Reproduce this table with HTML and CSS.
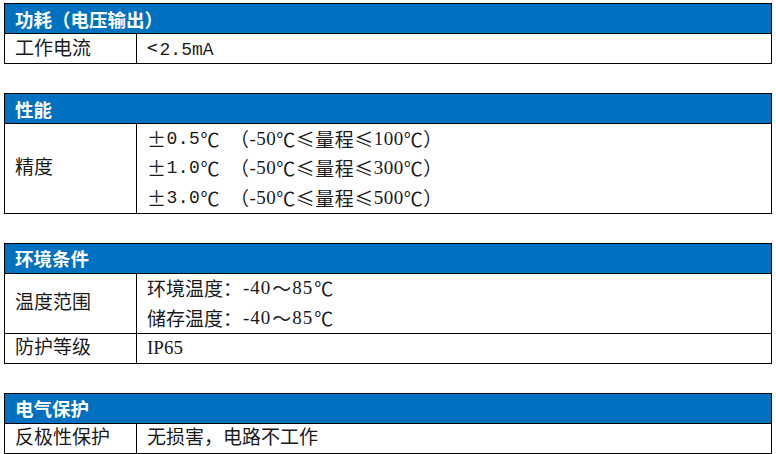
FILE: index.html
```html
<!DOCTYPE html>
<html lang="zh-CN">
<head>
    <meta charset="UTF-8">
    <title>技术参数</title>
    <link rel="stylesheet" href="styles.css">
</head>
<body>
    <!-- 功耗 -->
    <table class="spec">
        <tr><th colspan="2">功耗（电压输出）</th></tr>
        <tr>
            <td class="name">工作电流</td>
            <td><span class="cjk lt">&lt;</span><span class="mono">2.5mA</span></td>
        </tr>
    </table>

    <!-- 性能 -->
    <table class="spec">
        <tr><th colspan="2">性能</th></tr>
        <tr>
            <td class="name">精度</td>
            <td>
                <div class="line wide"><span class="cjk">±</span><span class="mono">0.5</span><span class="cjk">℃　（</span>-50<span class="cjk">℃≤量程≤</span>100<span class="cjk">℃）</span></div>
                <div class="line wide"><span class="cjk">±</span><span class="mono">1.0</span><span class="cjk">℃　（</span>-50<span class="cjk">℃≤量程≤</span>300<span class="cjk">℃）</span></div>
                <div class="line wide"><span class="cjk">±</span><span class="mono">3.0</span><span class="cjk">℃　（</span>-50<span class="cjk">℃≤量程≤</span>500<span class="cjk">℃）</span></div>
            </td>
        </tr>
    </table>

    <!-- 环境条件 -->
    <table class="spec">
        <tr><th colspan="2">环境条件</th></tr>
        <tr>
            <td class="name">温度范围</td>
            <td>
                <div class="line"><span class="cjk">环境温度：</span><span class="num">-40</span><span class="cjk">～</span><span class="num">85</span><span class="cjk">℃</span></div>
                <div class="line"><span class="cjk">储存温度：</span><span class="num">-40</span><span class="cjk">～</span><span class="num">85</span><span class="cjk">℃</span></div>
            </td>
        </tr>
        <tr>
            <td class="name">防护等级</td>
            <td>IP65</td>
        </tr>
    </table>

    <!-- 电气保护 -->
    <table class="spec">
        <tr><th colspan="2">电气保护</th></tr>
        <tr>
            <td class="name">反极性保护</td>
            <td>无损害，电路不工作</td>
        </tr>
    </table>
</body>
</html>
```

FILE: styles.css
```css
body {
    margin: 3px 4px 0;
    font-family: "Liberation Serif", "Noto Sans CJK SC", serif;
    font-size: 19px;
    color: #1a1a1a;
    background: #fff;
}
.spec {
    width: 768px;
    border-collapse: collapse;
    border: 1.5px solid #000;
    margin-bottom: 29px;
}
.spec:last-child {
    margin-bottom: 0;
}
.spec th {
    background-color: #0070c0;
    color: #fff;
    text-align: left;
    font-family: "Noto Sans CJK SC", sans-serif;
    font-weight: bold;
    font-size: 18.5px;
    height: 29px;
    padding: 0 10px;
    line-height: 20px;
}
.spec td {
    border: 1px solid #000;
    padding: 0 10px;
    height: 29px;
    line-height: 20px;
    vertical-align: middle;
}
.spec td.name {
    width: 111px;
}
.line {
    height: 29.5px;
    display: flex;
    align-items: center;
}
.wide {
    letter-spacing: 0.5px;
}
.cjk {
    font-family: "Noto Sans CJK SC", sans-serif;
}
.lt {
    padding-right: 2px;
}
.num {
    letter-spacing: 1px;
    padding: 0 1px;
}
.mono {
    font-family: "Liberation Mono", "Noto Sans CJK SC", monospace;
    font-size: 18px;
}
```
